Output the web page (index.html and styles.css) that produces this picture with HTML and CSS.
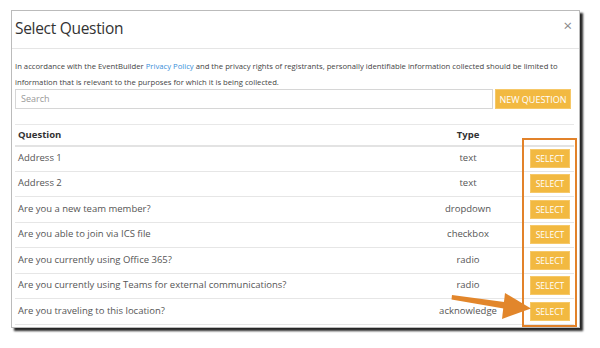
FILE: index.html
```html
<!DOCTYPE html>
<html>
<head>
<meta charset="utf-8">
<link rel="stylesheet" href="styles.css">
</head>
<body>
<div class="modal">
  <div class="modal-header">
    <h1 class="title">Select Question</h1>
    <span class="close">×</span>
  </div>
  <div class="modal-body">
    <p class="notice">In accordance with the EventBuilder <span class="link">Privacy Policy</span> and the privacy rights of registrants, personally identifiable information collected should be limited to information that is relevant to the purposes for which it is being collected.</p>
    <div class="search-row">
      <div class="search">Search</div>
      <button class="btn btn-new">NEW QUESTION</button>
    </div>
    <table class="table">
      <thead>
        <tr><th class="col-q">Question</th><th class="col-t">Type</th><th class="col-s"></th></tr>
      </thead>
      <tbody>
        <tr><td>Address 1</td><td class="col-t">text</td><td class="col-s"><button class="btn btn-sel">SELECT</button></td></tr>
        <tr><td>Address 2</td><td class="col-t">text</td><td class="col-s"><button class="btn btn-sel">SELECT</button></td></tr>
        <tr><td>Are you a new team member?</td><td class="col-t">dropdown</td><td class="col-s"><button class="btn btn-sel">SELECT</button></td></tr>
        <tr><td>Are you able to join via ICS file</td><td class="col-t">checkbox</td><td class="col-s"><button class="btn btn-sel">SELECT</button></td></tr>
        <tr><td>Are you currently using Office 365?</td><td class="col-t">radio</td><td class="col-s"><button class="btn btn-sel">SELECT</button></td></tr>
        <tr><td>Are you currently using Teams for external communications?</td><td class="col-t">radio</td><td class="col-s"><button class="btn btn-sel">SELECT</button></td></tr>
        <tr><td>Are you traveling to this location?</td><td class="col-t">acknowledge</td><td class="col-s"><button class="btn btn-sel">SELECT</button></td></tr>
      </tbody>
    </table>
  </div>
</div>
<div class="highlight"></div>
<svg class="arrow" width="600" height="348" viewBox="0 0 600 348">
  <path d="M452 295 L508 302.5 L506.5 309 L451.5 299.5 Z" fill="#e2862b"/>
  <path d="M505 293 L531 308.5 L502 319 Z" fill="#e2862b"/>
</svg>
</body>
</html>
```
FILE: styles.css
```css
* { box-sizing: border-box; }
html, body { margin: 0; padding: 0; background: #fff; }
body {
  font-family: "Open Sans", "Noto Sans", sans-serif;
  color: #555;
  position: relative;
  width: 600px;
  height: 348px;
  overflow: hidden;
}
.modal {
  margin: 10px 0 0 11px;
  width: 569px;
  height: 318px;
  border: 1px solid #bbb;
  background: #fff;
  box-shadow: 3px 3px 2px rgba(0,0,0,0.85);
}
.modal-header {
  height: 38px;
  border-bottom: 1px solid #e5e5e5;
  display: flex;
  align-items: center;
  justify-content: space-between;
  padding: 0 7px 3px 3px;
}
.title {
  margin: 0;
  font-size: 15.5px;
  font-weight: 400;
  color: #333;
  letter-spacing: -0.3px;
}
.close {
  font-size: 15px;
  color: #888;
  line-height: 1;
  margin-top: -5px;
}
.modal-body { padding: 0 5px 0 3px; }
.notice {
  margin: 10px 0 0;
  font-size: 7.7px;
  line-height: 15.5px;
  color: #444;
}
.link { color: #3a8fd9; }
.search-row {
  display: flex;
  gap: 2px;
  margin-top: -1px;
}
.search {
  flex: 1;
  height: 20px;
  border: 1px solid #d6d6d6;
  font-size: 9px;
  color: #999;
  padding: 0 0 0 5px;
  line-height: 18px;
}
.btn {
  border: 1px solid #f6c868;
  background: #f2b941;
  color: #fff;
  font-family: "Open Sans", "Noto Sans", sans-serif;
  padding: 0;
  cursor: pointer;
}
.btn-new {
  width: 76px;
  height: 20px;
  font-size: 9px;
  margin-right: 3px;
}
.table {
  width: 559px;
  margin-top: 15px;
  border-collapse: collapse;
  font-size: 9.5px;
}
.table th {
  height: 21px;
  border-top: 1px solid #e8e8e8;
  border-bottom: 2px solid #e3e3e3;
  font-weight: 700;
  color: #333;
  text-align: left;
  padding: 0 3px;
}
.table td {
  height: 25.5px;
  border-top: 1px solid #e6e6e6;
  padding: 0 3px 2px;
  vertical-align: middle;
}
.table tbody tr:last-child td { border-bottom: 1px solid #e6e6e6; }
.table .col-t { text-align: center; width: 116px; }
.table .col-s { width: 48px; text-align: right; padding: 0 4px 0 0; }
.btn-sel {
  width: 40px;
  height: 19px;
  font-size: 8.5px;
  display: inline-block;
  vertical-align: middle;
}
.highlight {
  position: absolute;
  left: 522px;
  top: 138px;
  width: 55px;
  height: 189px;
  border: 2.5px solid #e2822a;
}
.arrow {
  position: absolute;
  left: 0;
  top: 0;
  pointer-events: none;
}
```
